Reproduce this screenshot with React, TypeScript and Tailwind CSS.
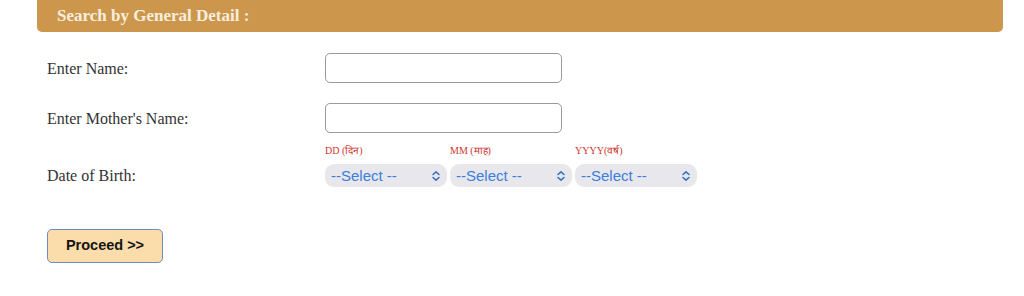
import React from 'react';

const serif = { fontFamily: '"Liberation Serif", "Times New Roman", serif' };

function UpDown() {
  return (
    <svg width="10" height="12" viewBox="0 0 10 12" fill="none" stroke="#3b6fc6" strokeWidth="1.6" strokeLinecap="round" strokeLinejoin="round">
      <path d="M2 4.5 L5 1.8 L8 4.5" />
      <path d="M2 7.5 L5 10.2 L8 7.5" />
    </svg>
  );
}

function DateSelect() {
  return (
    <div className="relative h-[23px] w-[122px]">
      <select
        className="h-full w-full appearance-none rounded-[9px] bg-[#e8e8ec] pl-[6px] pr-6 text-[15px] leading-none text-[#3b7ddd] outline-none"
        style={{ fontFamily: '"Liberation Sans", Arial, sans-serif' }}
        defaultValue=""
      >
        <option value="">--Select --</option>
      </select>
      <span className="pointer-events-none absolute right-[6px] top-1/2 -translate-y-1/2">
        <UpDown />
      </span>
    </div>
  );
}

export default function App() {
  return (
    <div className="h-[296px] w-[1024px] bg-white" style={serif}>
      {/* Header bar */}
      <div className="mx-[37px] flex h-[32px] w-[966px] items-center rounded-b-[5px] bg-[#cc974d] pl-[20px]">
        <span className="text-[17px] font-bold text-[#f8eedd]">Search by General Detail :</span>
      </div>

      <div className="pl-[47px] text-[16px] text-[#333333]">
        <div className="mt-[21px] flex h-[30px] items-center">
          <div className="w-[278px] pt-[1px]">Enter Name:</div>
          <input className="h-[30px] w-[237px] rounded-[5px] border border-[#9a9a9a] bg-white outline-none" />
        </div>

        <div className="mt-[20px] flex h-[30px] items-center">
          <div className="w-[278px] pt-[1px]">Enter Mother's Name:</div>
          <input className="h-[30px] w-[237px] rounded-[5px] border border-[#9a9a9a] bg-white outline-none" />
        </div>

        <div className="mt-[12px] flex">
          <div className="w-[278px]" />
          <div className="flex gap-[3px] text-[10px] leading-[12px] text-[#d0342c]">
            <div className="w-[122px]">DD (दिन)</div>
            <div className="w-[122px]">MM (माह)</div>
            <div className="w-[122px]">YYYY(वर्ष)</div>
          </div>
        </div>

        <div className="mt-[7px] flex h-[23px] items-center">
          <div className="w-[278px] pt-[1px]">Date of Birth:</div>
          <div className="flex gap-[3px]">
            <DateSelect />
            <DateSelect />
            <DateSelect />
          </div>
        </div>

        <button
          className="mt-[42px] flex h-[34px] w-[116px] items-center justify-center rounded-[5px] border border-[#6d8cc0] bg-[#fbdcab] text-[14.5px] font-bold text-[#141414]"
          style={{ fontFamily: '"Liberation Sans", Arial, sans-serif' }}
        >
          Proceed &gt;&gt;
        </button>
      </div>
    </div>
  );
}
